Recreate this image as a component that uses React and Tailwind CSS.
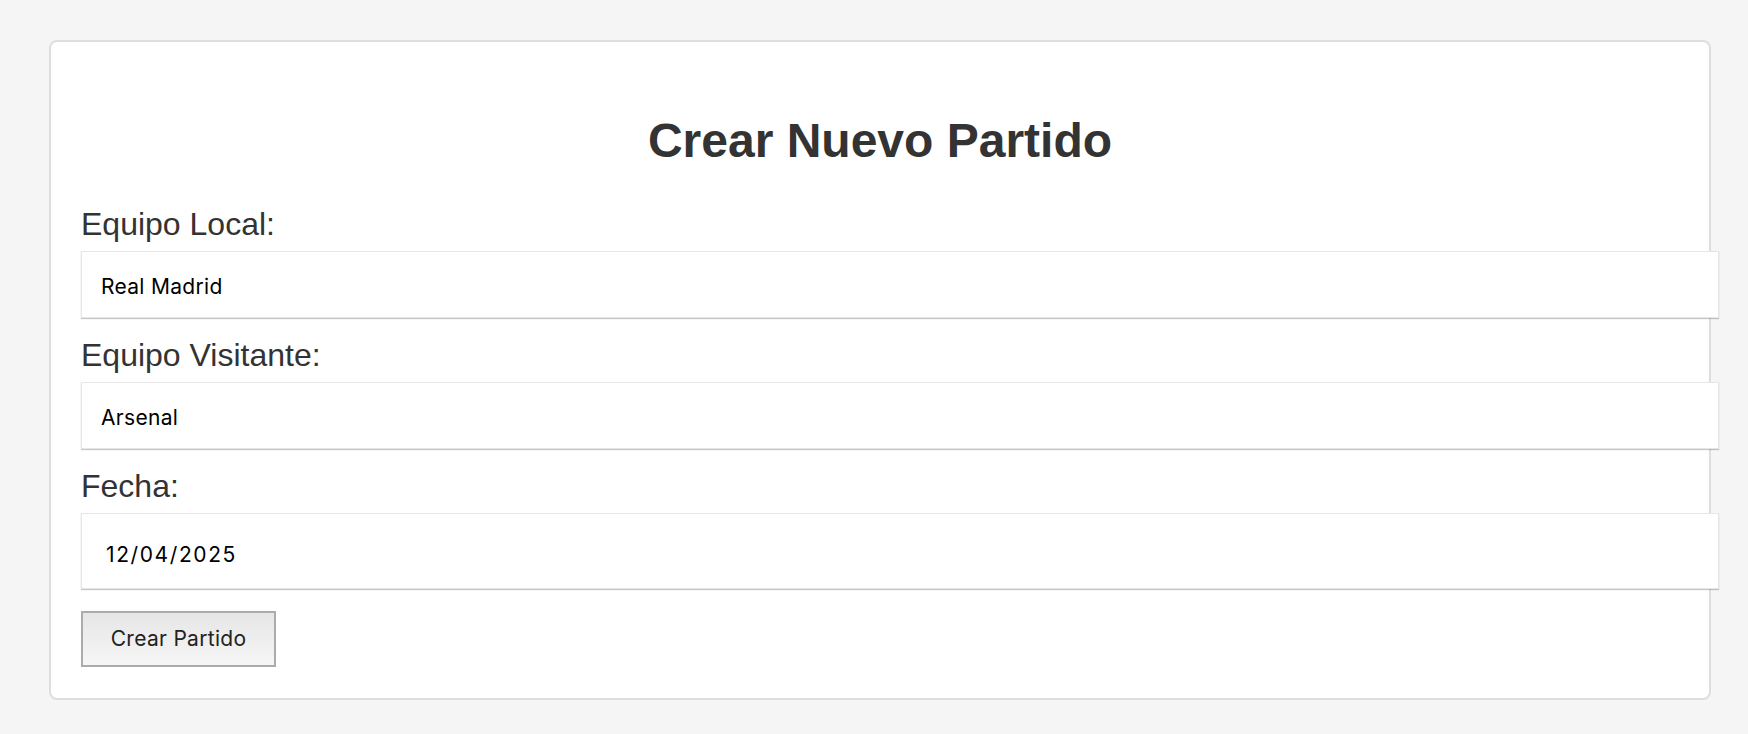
import { useState } from 'react';

const LABEL_CLS = 'block text-[32px] leading-[36px] text-[#333333] mb-[9px]';
const INPUT_CLS = 'block w-[calc(100%+40px)] h-[67px] px-[19px] pt-[3px] bg-white border border-[#e6e6e6] shadow-[0_1px_1px_rgba(0,0,0,0.22)] text-[21px] tracking-[0.3px] text-black outline-none font-[Inter,sans-serif]';

export default function App() {
  const [form, setForm] = useState({ local: 'Real Madrid', visitante: 'Arsenal', fecha: '12/04/2025' });

  return (
    <div className="min-h-screen bg-[#f5f5f5] pt-[40px] pb-[34px] font-['Liberation_Sans',Arial,sans-serif]">
      <div className="ml-[49px] w-[1662px] bg-white border-2 border-[#dedede] rounded-[8px] px-[30px] pt-[30px] pb-[31px]">
        <h1 className="mt-[41px] text-center text-[48px] leading-[55px] font-bold text-[#333333]">Crear Nuevo Partido</h1>

        <form className="mt-[38px]" onSubmit={(e) => e.preventDefault()}>
          <label className={LABEL_CLS}>Equipo Local:</label>
          <input type="text" value={form.local} onChange={(e) => setForm((f) => ({ ...f, local: e.target.value }))} className={INPUT_CLS} />

          <label className={`${LABEL_CLS} mt-[19px]`}>Equipo Visitante:</label>
          <input type="text" value={form.visitante} onChange={(e) => setForm((f) => ({ ...f, visitante: e.target.value }))} className={INPUT_CLS} />

          <label className={`${LABEL_CLS} mt-[19px]`}>Fecha:</label>
          <input type="text" value={form.fecha} onChange={(e) => setForm((f) => ({ ...f, fecha: e.target.value }))} className={`${INPUT_CLS} h-[76px] pl-[24px] pt-[7px] tracking-[1.6px]`} />

          <button type="submit" className="mt-[22px] block h-[56px] w-[195px] border-2 border-[#ababab] bg-gradient-to-b from-[#e6e6e6] to-[#f6f6f6] text-[21px] tracking-[0.3px] text-[#222222] font-[Inter,sans-serif]">Crear Partido</button>
        </form>
      </div>
    </div>
  );
}
